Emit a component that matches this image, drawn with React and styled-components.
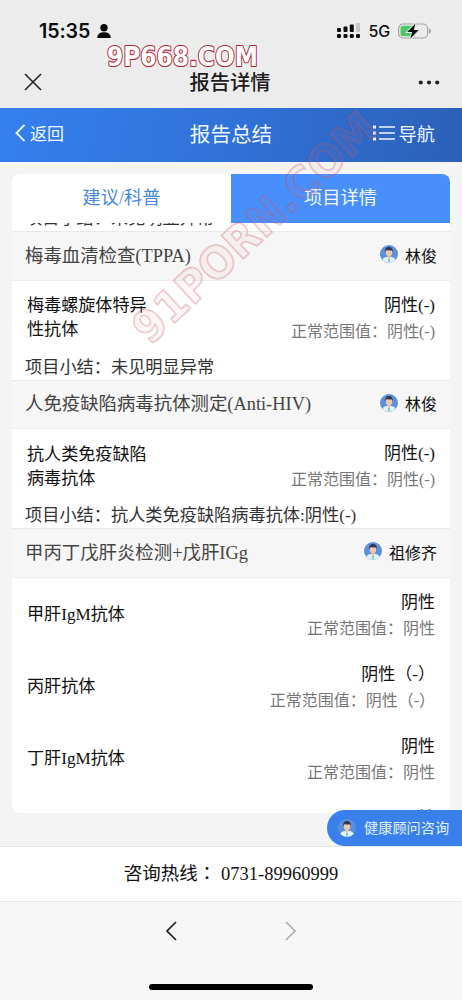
import React from 'react';
import styled, { createGlobalStyle } from 'styled-components';

const GlobalStyle = createGlobalStyle`
    * {
        box-sizing: border-box;
    }
    body {
        margin: 0;
        background: #f4f4f4;
        font-family: "Liberation Serif", "Noto Sans CJK SC", serif;
        color: #111;
    }
`;

const Screen = styled.div`
    position: relative;
    display: flex;
    flex-direction: column;
    width: 462px;
    height: 1000px;
    overflow: hidden;
    background: #f4f4f4;
`;

const StatusBar = styled.div`
    display: flex;
    align-items: center;
    justify-content: space-between;
    height: 56px;
    padding: 6px 30px 0 39px;
    background: #ececec;
    font-family: Inter, sans-serif;
`;

const StatusGroup = styled.div`
    display: flex;
    align-items: center;
    gap: ${props => props.$gap}px;
`;

const Clock = styled.span`
    font-size: 19.6px;
    font-weight: 600;
    line-height: 24px;
    letter-spacing: -0.1px;
    color: #0c0c0c;
`;

const Network = styled.span`
    font-size: 16px;
    font-weight: 500;
    line-height: 20px;
    letter-spacing: -0.2px;
`;

const TitleBar = styled.div`
    display: grid;
    grid-template-columns: 60px 1fr 60px;
    align-items: center;
    height: 52px;
    padding: 0 22px 0 24px;
    background: #ececec;
`;

const PageTitle = styled.h1`
    margin: 0 4px 2px 0;
    text-align: center;
    font: 500 20.3px/28px "Noto Sans CJK SC", sans-serif;
    color: #1c1c1c;
`;

const AlignEnd = styled.div`
    display: flex;
    justify-content: flex-end;
`;

const BlueHeader = styled.header`
    display: grid;
    grid-template-columns: 90px 1fr 90px;
    align-items: center;
    height: 54px;
    padding: 0 27px 4px 15px;
    background: linear-gradient(100deg, #3580ee 0%, #3072d8 50%, #2c60b8 100%);
    color: #f0f7ff;
    font-family: "Noto Sans CJK SC", sans-serif;
`;

const HeaderLink = styled.div`
    display: flex;
    align-items: center;
    justify-content: ${props => (props.$end ? 'flex-end' : 'flex-start')};
    gap: 4px;
    font-size: ${props => (props.$end ? 18.2 : 17)}px;
    line-height: 26px;
    white-space: nowrap;
`;

const HeaderTitle = styled.h2`
    margin: 0 0 0 12px;
    text-align: center;
    font-size: 20.6px;
    font-weight: 400;
    line-height: 30px;
`;

const Content = styled.main`
    height: 684px;
    padding: 12px 12px 33px;
`;

const Card = styled.section`
    display: flex;
    flex-direction: column;
    height: 639px;
    border-radius: 8px;
    overflow: hidden;
    background: #fff;
`;

const Tabs = styled.div`
    display: flex;
    flex: none;
    height: 49px;
`;

const Tab = styled.div`
    flex: 1;
    text-align: center;
    font-size: 18.2px;
    line-height: 49px;
    color: ${props => (props.$active ? '#f2f8ff' : '#4a87d8')};
    background: ${props => (props.$active ? '#498ffc' : '#fff')};
`;

const ScrollArea = styled.div`
    flex: 1;
    min-height: 0;
    overflow: hidden;
`;

/* the list is scrolled part way through the previous summary line */
const List = styled.div`
    margin-top: -19px;
`;

const SectionHead = styled.div`
    display: flex;
    align-items: center;
    justify-content: space-between;
    height: 49.5px;
    padding: 0 13px;
    border-top: 1px solid #e9e9e9;
    border-bottom: 1px solid #eeeeee;
    background: #f6f6f6;
`;

const SectionName = styled.div`
    font-size: 18.4px;
    line-height: 26px;
    color: #444;
`;

const Doctor = styled.div`
    display: flex;
    align-items: center;
    gap: 7px;
    padding-top: 2px;
    font-size: 16px;
    line-height: 24px;
    color: #111;

    svg {
        margin-bottom: 5px;
    }
`;

const Item = styled.div`
    display: flex;
    align-items: center;
    justify-content: space-between;
    height: 72px;
    padding: 3px 15px 0;
`;

const ItemName = styled.div`
    width: 124px;
    font-size: 17.1px;
    line-height: 24px;
`;

const ItemResult = styled.div`
    text-align: right;
    white-space: nowrap;
`;

const Value = styled.div`
    font-size: 17px;
    line-height: 26px;
`;

const Range = styled.div`
    font-size: 16px;
    line-height: 25px;
    color: #777;
`;

const Summary = styled.div`
    height: 27px;
    padding: 0 13px;
    font-size: 17.2px;
    line-height: 29px;
    color: #333;
`;

const Hotline = styled.div`
    height: 56px;
    border-top: 1px solid #e6e6e6;
    border-bottom: 1px solid #e9e9e9;
    background: #fff;
    text-align: center;
    font-family: "Liberation Serif", "Noto Sans CJK TC", serif;
    font-size: 18.5px;
    line-height: 54px;
`;

const BottomBar = styled.footer`
    display: flex;
    flex-direction: column;
    align-items: center;
    justify-content: space-between;
    flex: 1;
    padding: 19px 0 10px;
    background: #f6f6f6;
`;

const Arrows = styled.div`
    display: flex;
    gap: 108px;
`;

const HomeIndicator = styled.div`
    width: 164px;
    height: 6px;
    border-radius: 3px;
    background: #000;
`;

const Consult = styled.div`
    position: absolute;
    right: 0;
    top: 810px;
    display: flex;
    align-items: center;
    gap: 8px;
    width: 135px;
    height: 36px;
    padding-left: 11px;
    border-radius: 18px 0 0 18px;
    background: #3980ed;
    color: #e2f0ff;
    font-size: 14.2px;
    line-height: 22px;
    white-space: nowrap;
`;

const Watermark = styled.svg`
    position: absolute;
    left: 0;
    top: 0;
    pointer-events: none;
    font-family: "DejaVu Sans", sans-serif;
    font-weight: 700;
`;

const SiteMark = styled.text`
    font-size: 27px;
    fill: #fff;
    stroke: #b3283a;
    stroke-width: 2.2px;
    stroke-linejoin: round;
    paint-order: stroke;
`;

const DiagonalMark = styled.text`
    font-size: 44px;
    fill: rgba(225, 120, 130, 0.07);
    stroke: rgba(205, 80, 95, 0.3);
    stroke-width: 1.8px;
    stroke-linejoin: round;
`;

const Avatar = ({ size = 18 }) => (
    <svg width={size} height={size} viewBox="0 0 18 18">
        <circle cx="9" cy="9" r="9" fill="#5b91dc" />
        <path d="M2.4 15c.8-2.3 3-3.2 6.6-3.2s5.8.9 6.6 3.2A9 9 0 0 1 9 18a9 9 0 0 1-6.6-3z" fill="#e3f1f8" />
        <path d="M7.4 10h3.2v2.5L9 14l-1.6-1.5z" fill="#e9bd9e" />
        <ellipse cx="9" cy="7.5" rx="3.2" ry="3.8" fill="#efc8ac" />
        <path d="M5.3 7.3C4.8 3.8 6.4 2 9 2s4.2 1.8 3.7 5.3l-.7-1.8c-2 .2-4 0-5.3-.6z" fill="#37394b" />
        <path d="M9 13.5l.8 1-.5 3.5h-.6l-.5-3.5z" fill="#62b58c" />
    </svg>
);

const Chevron = ({ right, width = 11, height = 20, color = '#222', stroke = 1.7 }) => (
    <svg width={width} height={height} viewBox="0 0 11 20" fill="none" stroke={color} strokeWidth={stroke}>
        <path d={right ? 'M1 1l9 9-9 9' : 'M10 1l-9 9 9 9'} />
    </svg>
);

const PersonIcon = () => (
    <svg width="14" height="16" viewBox="0 0 14 16" fill="#0c0c0c">
        <circle cx="7" cy="4.8" r="3.7" />
        <path d="M.3 15c0-4 2.7-5.7 6.700-5.700s6.700 1.700 6.700 5.700z" />
    </svg>
);

const SignalIcon = () => (
    <svg width="24" height="16" viewBox="0 0 24 16" fill="#0c0c0c">
        <rect x="0" y="5" width="4" height="4" rx="1" />
        <rect x="6.5" y="3.5" width="4" height="5.5" rx="1" />
        <rect x="12.8" y="1.5" width="4" height="7.5" rx="1" />
        <rect x="19" y="0" width="4" height="9" rx="1" fill="#c6c6c6" />
        <rect x="0" y="11" width="4" height="4" rx="1.3" />
        <rect x="6.5" y="11" width="4" height="4" rx="1.3" />
        <rect x="12.8" y="11" width="4" height="4" rx="1.3" />
        <rect x="19" y="11" width="4" height="4" rx="1.3" />
    </svg>
);

const BatteryIcon = () => (
    <svg width="34" height="16" viewBox="0 0 34 16">
        <rect x=".6" y="1" width="29" height="14" rx="4.5" fill="none" stroke="#a5a5a5" strokeWidth="1.2" />
        <path d="M5 2.8h12v10.4H5A2.5 2.5 0 0 1 2.5 10.700V5.300A2.500 2.500 0 0 1 5 2.800z" fill="#4cc768" />
        <path d="M31 5.5c1.5.6 2 1.5 2 2.5s-.5 1.9-2 2.5z" fill="#a5a5a5" />
        <path d="M17.5.4L9 9h5.2l-2 6.800L20.800 7h-5z" fill="#0c0c0c" stroke="#ececec" strokeWidth="1.8" paintOrder="stroke" />
    </svg>
);

const CloseIcon = () => (
    <svg width="18" height="18" viewBox="0 0 18 18" stroke="#222" strokeWidth="1.6">
        <path d="M1 1l16 16M17 1L1 17" />
    </svg>
);

const MoreIcon = () => (
    <svg width="22" height="5" viewBox="0 0 22 5" fill="#222">
        <circle cx="2.8" cy="2.5" r="2.1" />
        <circle cx="11" cy="2.5" r="2.1" />
        <circle cx="19.2" cy="2.5" r="2.1" />
    </svg>
);

const MenuIcon = () => (
    <svg width="22" height="16" viewBox="0 0 22 16" stroke="#f0f7ff" strokeWidth="1.7" fill="#f0f7ff">
        <path d="M6 2h16M6 8h16M6 14h16" />
        <path d="M0 2h3M0 8h3M0 14h3" strokeWidth="3" />
    </svg>
);

const sections = [
    {
        name: '梅毒血清检查(TPPA)',
        doctor: '林俊',
        items: [{ name: '梅毒螺旋体特异性抗体', value: '阴性(-)' }],
        summary: '未见明显异常'
    },
    {
        name: '人免疫缺陷病毒抗体测定(Anti-HIV)',
        doctor: '林俊',
        items: [{ name: '抗人类免疫缺陷病毒抗体', value: '阴性(-)' }],
        summary: '抗人类免疫缺陷病毒抗体:阴性(-)'
    },
    {
        name: '甲丙丁戊肝炎检测+戊肝IGg',
        doctor: '祖修齐',
        items: [
            { name: '甲肝IgM抗体', value: '阴性' },
            { name: '丙肝抗体', value: '阴性（-）' },
            { name: '丁肝IgM抗体', value: '阴性' },
            { name: '戊肝IgM抗体', value: '阴性' }
        ]
    }
];

const Section = ({ section }) => (
    <div>
        <SectionHead>
            <SectionName>{section.name}</SectionName>
            <Doctor>
                <Avatar />
                {section.doctor}
            </Doctor>
        </SectionHead>
        {section.items.map(item => (
            <Item key={item.name}>
                <ItemName>{item.name}</ItemName>
                <ItemResult>
                    <Value>{item.value}</Value>
                    <Range>正常范围值：{item.value}</Range>
                </ItemResult>
            </Item>
        ))}
        {section.summary && <Summary>项目小结：{section.summary}</Summary>}
    </div>
);

export default function App() {
    return (
        <Screen>
            <GlobalStyle />
            <StatusBar>
                <StatusGroup $gap={7}>
                    <Clock>15:35</Clock>
                    <PersonIcon />
                </StatusGroup>
                <StatusGroup $gap={8}>
                    <SignalIcon />
                    <Network>5G</Network>
                    <BatteryIcon />
                </StatusGroup>
            </StatusBar>
            <TitleBar>
                <CloseIcon />
                <PageTitle>报告详情</PageTitle>
                <AlignEnd>
                    <MoreIcon />
                </AlignEnd>
            </TitleBar>
            <BlueHeader>
                <HeaderLink>
                    <Chevron height={18} color="#f0f7ff" stroke={2} />
                    返回
                </HeaderLink>
                <HeaderTitle>报告总结</HeaderTitle>
                <HeaderLink $end>
                    <MenuIcon />
                    导航
                </HeaderLink>
            </BlueHeader>
            <Content>
                <Card>
                    <Tabs>
                        <Tab>建议/科普</Tab>
                        <Tab $active>项目详情</Tab>
                    </Tabs>
                    <ScrollArea>
                        <List>
                            <Summary>项目小结：未见明显异常</Summary>
                            {sections.map(section => (
                                <Section key={section.name} section={section} />
                            ))}
                        </List>
                    </ScrollArea>
                </Card>
            </Content>
            <Hotline>咨询热线：&nbsp;0731-89960999</Hotline>
            <BottomBar>
                <Arrows>
                    <Chevron />
                    <Chevron right color="#b0b0b0" />
                </Arrows>
                <HomeIndicator />
            </BottomBar>
            <Consult>
                <Avatar />
                健康顾问咨询
            </Consult>
            <Watermark width="462" height="400" viewBox="0 0 462 400">
                <SiteMark x="107" y="66" textLength="151" lengthAdjust="spacingAndGlyphs">
                    9P668.COM
                </SiteMark>
                <DiagonalMark transform="translate(150 346) rotate(-43)" textLength="314" lengthAdjust="spacingAndGlyphs">
                    91PORN.COM
                </DiagonalMark>
            </Watermark>
        </Screen>
    );
}
